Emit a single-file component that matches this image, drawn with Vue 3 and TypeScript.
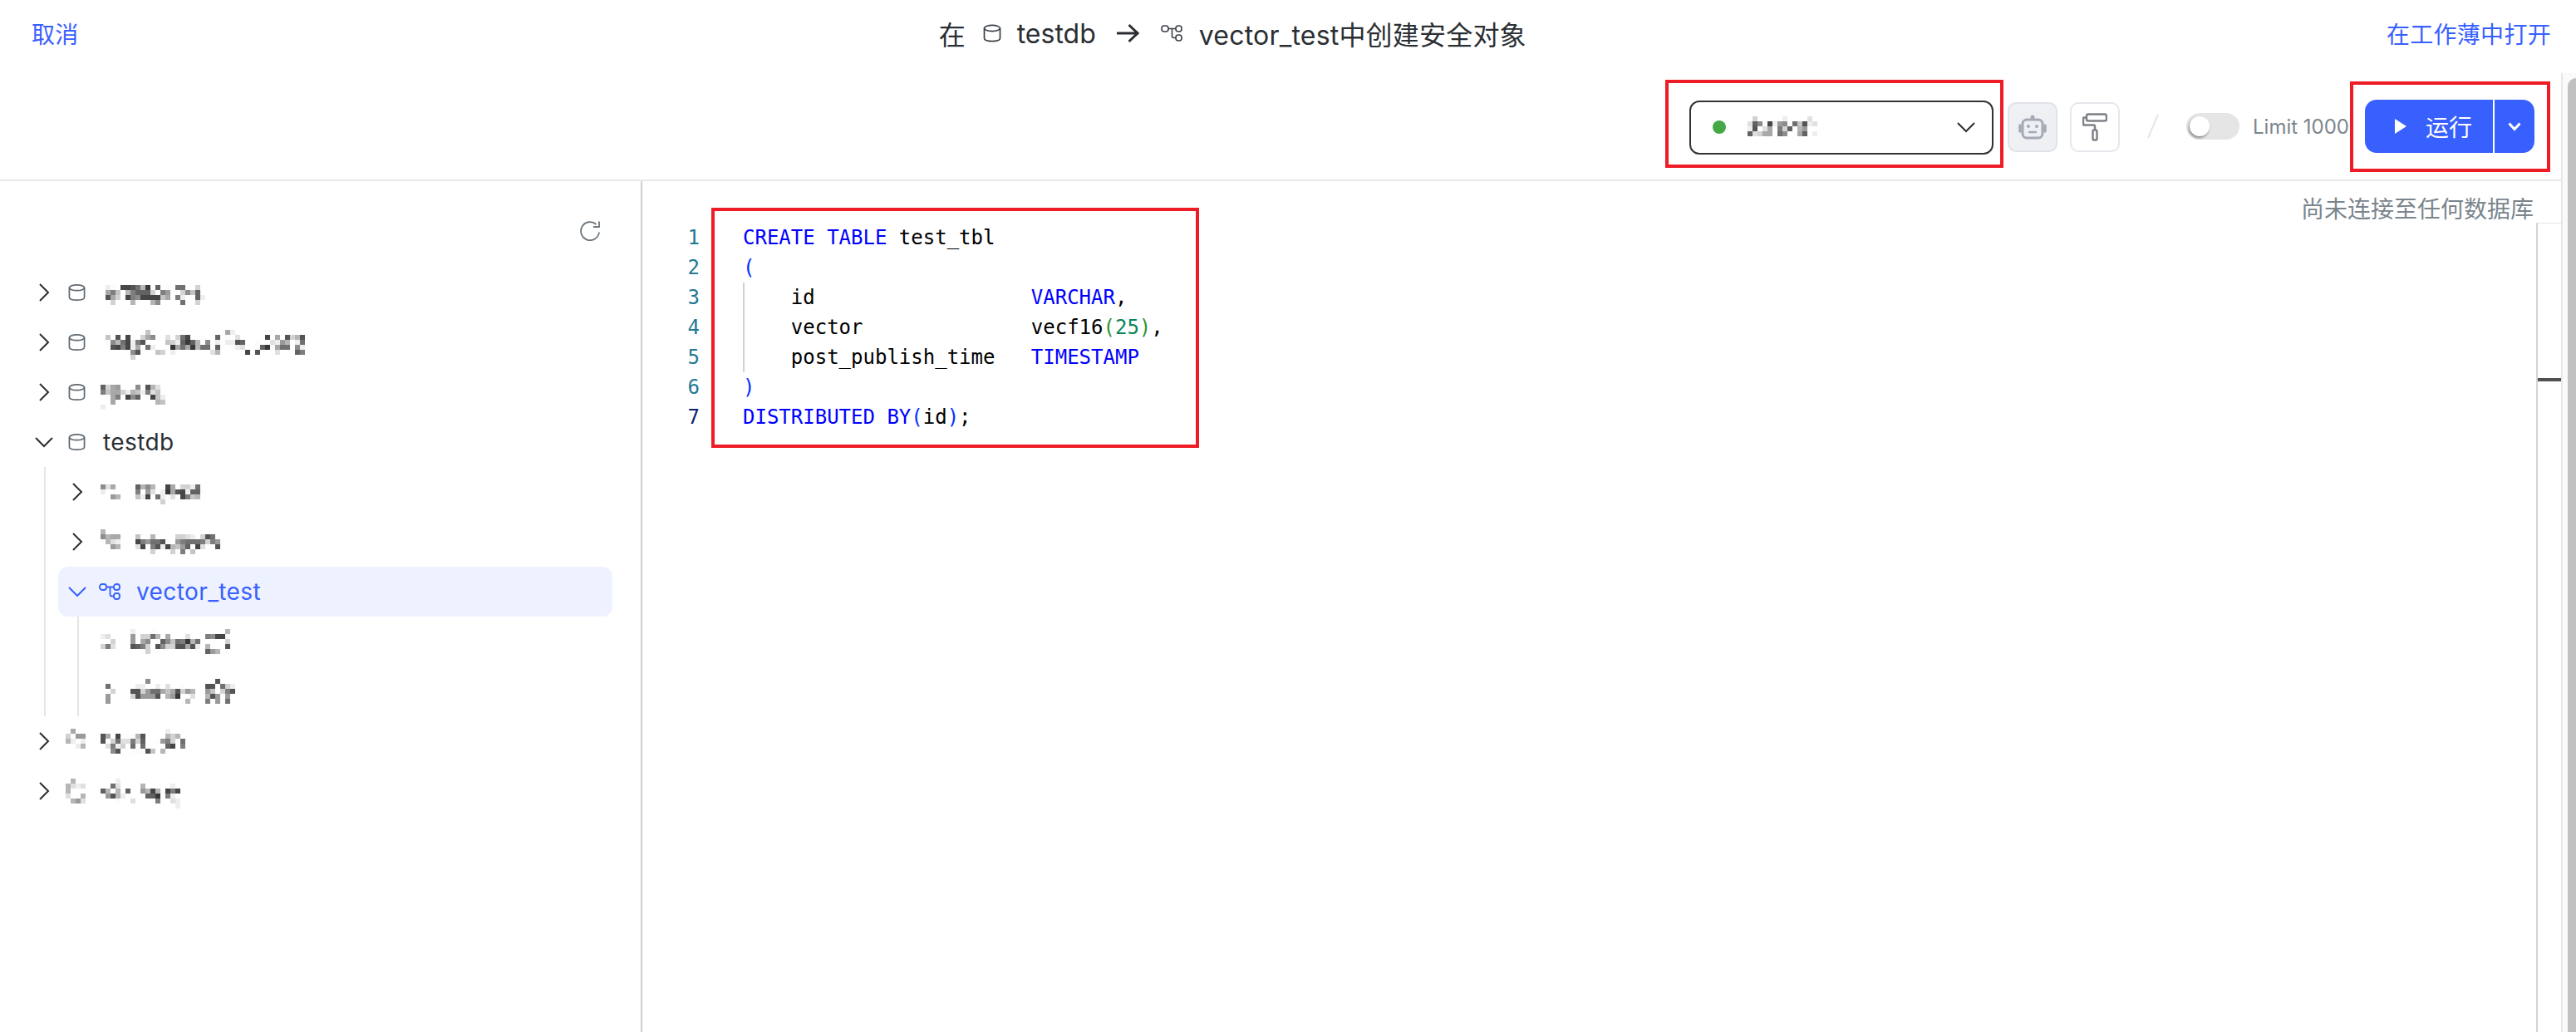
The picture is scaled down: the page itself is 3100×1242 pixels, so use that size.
<script setup lang="ts">
import { h } from 'vue'

type MosaicProps = { rows: string[]; top?: number; ml?: number; mr?: number }

const cell = 6
const shade = (c: string): string => {
  const v = parseInt(c, 16)
  const g = Math.round(42 + (v * (252 - 42)) / 15)
  return `rgb(${g},${g},${g})`
}

const Mosaic = (p: MosaicProps) => {
  const cols = Math.max(...p.rows.map((r) => r.length))
  const rects: ReturnType<typeof h>[] = []
  p.rows.forEach((row, y) => {
    ;[...row].forEach((c, x) => {
      if (c !== '.') rects.push(h('rect', { x: x * cell, y: y * cell, width: cell, height: cell, fill: shade(c) }))
    })
  })
  return h(
    'svg',
    {
      class: 'mosaic',
      width: cols * cell,
      height: p.rows.length * cell,
      'shape-rendering': 'crispEdges',
      style: { marginTop: `${p.top ?? 0}px`, marginLeft: `${p.ml ?? 0}px`, marginRight: `${p.mr ?? 0}px` },
    },
    rects,
  )
}

const m = {
  r1: ['ef.2235a1.4.f.55..c', '96b.a6444c.68..c7b4', '39c.2672222b9.6e..4e', '.c...a...a7....5..c'],
  r2: [
    '........b...............9e',
    'b.3.2f.c97..d.c52.ff..4.f.d.....2.9.3ca3',
    'f7a52e63....bce414a.7.e.ee34..f..de8a.e5',
    '.3262e9f5e..f19591a55f4..fed..f41f955.7e',
    '.....73...bc.e.......da.....2.3...d...46',
    '.....c',
  ],
  r3: ['4c98...7.3ad', '6b99ceabe6db', '.f96.274.f2be', '..9........ab', 'e'],
  a1Icon: ['7d9', 'e.f', '..8a'],
  a1: ['4a7a..29.cce5', '6.8d.e1932e44f', 'be2.5efd.26ba', '.....c'],
  a2Icon: ['a', '7a99', '.ade', '..8a'],
  a2: ['b.fa....ccde.c35', '268553f.865556c68f', 'd2.63e2ab84.2d..3', '...c...c.6.b'],
  b1Icon: ['...', 'ed.', '..c', 'c6d'],
  b1: ['e...f..............a', '8.cc5a.9...d...6722f', '8.97.f47b561a5.....c', '346c.37cc3393e.a...3', '..fc.f.........48a.f'],
  b2Icon: ['...', '.5.', '..c', '.8.', '.8.'],
  b2: ['...7.............3', '.ee..e.d..f....33.5ce', '33c8559b93c8a..8b.c63', 'c38883.a81.fd..a38.8', '...........a...6.8.5'],
  c1Icon: ['f9..', 'cf88', 'ae.e', '..ea'],
  c1: ['.............e', '39.2.ffa3....aca', '3.c5dd6c4..f86c.5', '.d6ec.5.5....42.6', '..73..fff3b.a'],
  c2Icon: ['.a..', 'aded', 'a...', 'd..a', '.a8d'],
  c2: ['...e', '..5d....a....fe', '4a.a.4..8a2a.262', '.83ae....441.6e', '...f..d...f6..de', '...............e'],
  conn: ['.c.....e....d..', 'd47f2e87.5b3ed', 'e3.d9.6c4.a8..', '4dc99.57..94.e'],
}
</script>

<template>
  <div class="page">
    <header class="header">
      <a class="link">取消</a>
      <div class="title">
        <span>在</span>
        <svg class="t-db" width="22" height="22" viewBox="0 0 22 22" fill="none" stroke="#3a4046" stroke-width="1.7">
          <ellipse cx="11" cy="5" rx="9.5" ry="3.6" />
          <path d="M1.5 5v12c0 2.2 3 3.6 9.5 3.6s9.500-1.400 9.500-3.600V5" />
        </svg>
        <span>testdb</span>
        <svg class="t-arrow" width="28" height="24" viewBox="0 0 28 24" fill="none" stroke="#2b2f33" stroke-width="3">
          <path d="M1 12h25M15.500 2l10.500 10-10.500 10" />
        </svg>
        <svg class="t-flow" width="26" height="20" viewBox="0 0 26 20" fill="none" stroke="#3a4046" stroke-width="1.600">
          <rect x="1" y="1" width="8" height="7" rx="3" />
          <rect x="18" y="1" width="7" height="7" rx="3" />
          <rect x="18" y="12" width="7" height="7" rx="3" />
          <path d="M9 4.500h9M13.500 4.500v9a2 2 0 0 0 2 2H18" />
        </svg>
        <span class="t-end">vector_test中创建安全对象</span>
      </div>
      <a class="link">在工作薄中打开</a>
    </header>

    <div class="body">
      <div class="content">
        <div class="toolbar">
          <div class="select">
            <i class="dot"></i>
            <Mosaic :rows="m.conn" :top="17" />
            <svg class="sel-chev" width="22" height="13" viewBox="0 0 22 13" fill="none" stroke="#2b2f33" stroke-width="2">
              <path d="M1 1l10 10L21 1" />
            </svg>
          </div>
          <button class="tool tool-on">
            <svg width="34" height="30" viewBox="0 0 34 30" fill="none" stroke="#a3aab5" stroke-width="3">
              <rect x="5" y="6" width="24" height="22" rx="5" fill="#eef0f3" />
              <circle cx="17" cy="3" r="2.500" fill="#a3aab5" stroke="none" />
              <path d="M17 3v3" />
              <circle cx="12" cy="14" r="2" fill="#a3aab5" stroke="none" />
              <circle cx="22" cy="14" r="2" fill="#a3aab5" stroke="none" />
              <path d="M12 21h10" stroke-width="2.500" />
              <path d="M2 13v7M32 13v7" stroke-width="3.500" stroke-linecap="round" />
            </svg>
          </button>
          <button class="tool">
            <svg width="30" height="34" viewBox="0 0 30 34" fill="none" stroke="#7d8288" stroke-width="2.500">
              <rect x="5" y="1.500" width="24" height="8" rx="2" />
              <path d="M5 5.500H2a1 1 0 0 0-1 1v7a1 1 0 0 0 1 1h11.500a1.500 1.500 0 0 1 1.500 1.500v4" />
              <rect x="12.500" y="20.500" width="5" height="12" rx="1.500" />
            </svg>
          </button>
          <svg class="slash" width="14" height="30" viewBox="0 0 14 30" stroke="#e3e6e9" stroke-width="2">
            <path d="M13 1L1 29" />
          </svg>
          <div class="toggle"><i class="knob"></i></div>
          <span class="limit">Limit 1000</span>
          <div class="run-group">
            <button class="run">
              <svg width="16" height="18" viewBox="0 0 16 18"><path d="M1 0l14 9-14 9z" fill="#fff" /></svg>
              <span>运行</span>
            </button>
            <button class="run-more">
              <svg width="16" height="11" viewBox="0 0 16 11" fill="none" stroke="#fff" stroke-width="3">
                <path d="M1.500 1.500L8 8.500l6.500-7" />
              </svg>
            </button>
          </div>
        </div>

        <div class="panes">
          <aside class="side">
            <div class="refresh-row">
              <svg width="24" height="24" viewBox="0 0 24 24" fill="none" stroke="#6b757d" stroke-width="1.800">
                <path d="M23 13.500A11 11 0 1 1 19.500 4" />
                <path d="M23 .500v6.500h-7" />
              </svg>
            </div>
            <div class="row">
              <svg class="chev" width="26" height="22" viewBox="0 0 26 22" fill="none" stroke="#2b2f33" stroke-width="2"><path d="M8 1l10 10L8 21" /></svg>
              <svg class="db" width="21" height="22" viewBox="0 0 22 22" fill="none" stroke="#5f6972" stroke-width="1.800"><ellipse cx="11" cy="5" rx="9.500" ry="3.600" /><path d="M1.500 5v12c0 2.200 3 3.600 9.500 3.600s9.500-1.400 9.500-3.600V5" /></svg>
              <Mosaic :rows="m.r1" :top="21" :ml="3" />
            </div>
            <div class="row">
              <svg class="chev" width="26" height="22" viewBox="0 0 26 22" fill="none" stroke="#2b2f33" stroke-width="2"><path d="M8 1l10 10L8 21" /></svg>
              <svg class="db" width="21" height="22" viewBox="0 0 22 22" fill="none" stroke="#5f6972" stroke-width="1.800"><ellipse cx="11" cy="5" rx="9.500" ry="3.600" /><path d="M1.500 5v12c0 2.200 3 3.600 9.500 3.600s9.500-1.400 9.500-3.600V5" /></svg>
              <Mosaic :rows="m.r2" :top="15" :ml="3" />
            </div>
            <div class="row">
              <svg class="chev" width="26" height="22" viewBox="0 0 26 22" fill="none" stroke="#2b2f33" stroke-width="2"><path d="M8 1l10 10L8 21" /></svg>
              <svg class="db" width="21" height="22" viewBox="0 0 22 22" fill="none" stroke="#5f6972" stroke-width="1.800"><ellipse cx="11" cy="5" rx="9.500" ry="3.600" /><path d="M1.500 5v12c0 2.200 3 3.600 9.500 3.600s9.500-1.400 9.500-3.600V5" /></svg>
              <Mosaic :rows="m.r3" :top="21" :ml="-3" />
            </div>
            <div class="row">
              <svg class="chev" width="26" height="14" viewBox="0 0 26 14" fill="none" stroke="#2b2f33" stroke-width="2"><path d="M3 2l10 10L23 2" /></svg>
              <svg class="db" width="21" height="22" viewBox="0 0 22 22" fill="none" stroke="#5f6972" stroke-width="1.800"><ellipse cx="11" cy="5" rx="9.500" ry="3.600" /><path d="M1.500 5v12c0 2.200 3 3.600 9.500 3.600s9.500-1.400 9.500-3.600V5" /></svg>
              <span class="label">testdb</span>
            </div>

            <div class="children">
              <div class="row l1">
                <svg class="chev" width="26" height="22" viewBox="0 0 26 22" fill="none" stroke="#2b2f33" stroke-width="2"><path d="M8 1l10 10L8 21" /></svg>
                <Mosaic :rows="m.a1Icon" :top="21" :ml="15" :mr="18" />
                <Mosaic :rows="m.a1" :top="21" />
              </div>
              <div class="row l1">
                <svg class="chev" width="26" height="22" viewBox="0 0 26 22" fill="none" stroke="#2b2f33" stroke-width="2"><path d="M8 1l10 10L8 21" /></svg>
                <Mosaic :rows="m.a2Icon" :top="15" :ml="15" :mr="18" />
                <Mosaic :rows="m.a2" :top="21" />
              </div>
              <div class="row l1 active">
                <svg class="chev" width="26" height="14" viewBox="0 0 26 14" fill="none" stroke="#3860ff" stroke-width="2"><path d="M3 2l10 10L23 2" /></svg>
                <svg class="flow" width="26" height="20" viewBox="0 0 26 20" fill="none" stroke="#3860ff" stroke-width="1.800">
                  <rect x="1" y="1" width="8" height="7" rx="3" />
                  <rect x="18" y="1" width="7" height="7" rx="3" />
                  <rect x="18" y="12" width="7" height="7" rx="3" />
                  <path d="M9 4.500h9M13.500 4.500v9a2 2 0 0 0 2 2H18" />
                </svg>
                <span class="label">vector_test</span>
              </div>
              <div class="children-2">
                <div class="row l2">
                  <Mosaic :rows="m.b1Icon" :top="15" :mr="18" />
                  <Mosaic :rows="m.b1" :top="15" />
                </div>
                <div class="row l2">
                  <Mosaic :rows="m.b2Icon" :top="15" :mr="18" />
                  <Mosaic :rows="m.b2" :top="15" />
                </div>
              </div>
            </div>

            <div class="row">
              <svg class="chev" width="26" height="22" viewBox="0 0 26 22" fill="none" stroke="#2b2f33" stroke-width="2"><path d="M8 1l10 10L8 21" /></svg>
              <Mosaic :rows="m.c1Icon" :top="15" :ml="13" :mr="18" />
              <Mosaic :rows="m.c1" :top="15" />
            </div>
            <div class="row">
              <svg class="chev" width="26" height="22" viewBox="0 0 26 22" fill="none" stroke="#2b2f33" stroke-width="2"><path d="M8 1l10 10L8 21" /></svg>
              <Mosaic :rows="m.c2Icon" :top="15" :ml="13" :mr="18" />
              <Mosaic :rows="m.c2" :top="15" />
            </div>
          </aside>

          <main class="editor">
            <div class="notice">尚未连接至任何数据库</div>
            <div class="gutter">
              <div>1</div><div>2</div><div>3</div><div>4</div><div>5</div><div>6</div><div class="cur">7</div>
            </div>
            <pre class="code"><i class="indent"></i><span class="kw">CREATE TABLE</span> test_tbl
<span class="br">(</span>
    id                  <span class="kw">VARCHAR</span>,
    vector              vecf16<span class="gr">(</span><span class="num">25</span><span class="gr">)</span>,
    post_publish_time   <span class="kw">TIMESTAMP</span>
<span class="br">)</span>
<span class="kw">DISTRIBUTED BY</span><span class="br">(</span>id<span class="br">)</span>;</pre>
            <div class="ruler"><i class="mark"></i></div>
          </main>
        </div>
      </div>
      <div class="track"><div class="thumb"></div></div>
    </div>

    <i class="mark-box box-a"></i>
    <i class="mark-box box-b"></i>
    <i class="mark-box box-c"></i>
  </div>
</template>

<style>
html,
body {
  margin: 0;
  background: #fff;
  overflow: hidden;
}
</style>

<style scoped>
.page {
  position: relative;
  width: 3100px;
  height: 1242px;
  overflow: hidden;
  display: flex;
  flex-direction: column;
  background: #fff;
  font-family: Inter, 'Noto Sans CJK SC', sans-serif;
  color: #2b2f33;
}
.header {
  height: 88px;
  box-sizing: border-box;
  padding: 0 30px 8px 38px;
  display: flex;
  align-items: center;
  justify-content: space-between;
  flex: none;
}
.link {
  font-size: 28px;
  color: #3860ff;
  letter-spacing: 0.3px;
}
.title {
  display: flex;
  align-items: center;
  font-size: 32px;
  color: #2b2f33;
}
.t-db {
  margin: 0 19px 0 21px;
}
.t-arrow {
  margin: 0 26px 0 24px;
}
.t-flow {
  margin-right: 20px;
}
.t-end {
  letter-spacing: 0.2px;
}
.body {
  flex: 1;
  min-height: 0;
  display: flex;
}
.content {
  flex: 1;
  min-width: 0;
  display: flex;
  flex-direction: column;
}
.toolbar {
  height: 130px;
  box-sizing: border-box;
  flex: none;
  border-bottom: 2px solid #e5e9ec;
  display: flex;
  align-items: center;
  justify-content: flex-end;
  padding-right: 32px;
}
.select {
  width: 366px;
  height: 65px;
  box-sizing: border-box;
  margin-top: 2px;
  border: 2px solid #333;
  border-radius: 12px;
  display: flex;
  align-items: center;
  padding: 0 20px 0 26px;
}
.dot {
  width: 16px;
  height: 16px;
  border-radius: 50%;
  background: #43a845;
  margin-right: 26px;
}
.sel-chev {
  margin-left: auto;
}
.tool {
  width: 60px;
  height: 60px;
  box-sizing: border-box;
  margin: 2px 0 0 15px;
  padding: 0;
  border: 2px solid #e5e7eb;
  border-radius: 10px;
  background: #fff;
  display: flex;
  align-items: center;
  justify-content: center;
}
.tool-on {
  margin-left: 17px;
  background: #eef0f3;
  border-color: #dfe2e6;
}
.slash {
  margin: 0 33px;
}
.toggle {
  width: 64px;
  height: 32px;
  border-radius: 16px;
  background: #e5e5e5;
  display: flex;
  align-items: center;
  padding-left: 4px;
  box-sizing: border-box;
}
.knob {
  width: 24px;
  height: 24px;
  border-radius: 50%;
  background: #fff;
  box-shadow: -1px 2px 3px rgba(0, 0, 0, 0.4);
}
.limit {
  margin-left: 16px;
  font-size: 24px;
  color: #7b858d;
  white-space: nowrap;
  width: 117px;
}
.run-group {
  margin-left: 18px;
  display: flex;
  gap: 2px;
  height: 64px;
}
.run,
.run-more {
  border: 0;
  padding: 0;
  background: #3860ff;
  color: #fff;
  font-family: inherit;
  display: flex;
  align-items: center;
}
.run {
  width: 154px;
  border-radius: 14px 0 0 14px;
  padding-left: 35px;
  gap: 22px;
  font-size: 28px;
  box-sizing: border-box;
}
.run-more {
  width: 48px;
  border-radius: 0 14px 14px 0;
  justify-content: center;
}
.panes {
  flex: 1;
  min-height: 0;
  display: flex;
}
.side {
  width: 773px;
  box-sizing: border-box;
  flex: none;
  border-right: 2px solid #cfcfcf;
}
.refresh-row {
  height: 104px;
  box-sizing: border-box;
  padding: 48px 49px 0 0;
  display: flex;
  justify-content: flex-end;
  align-items: flex-start;
}
.row {
  height: 60px;
  display: flex;
  align-items: center;
  padding-left: 40px;
}
.mosaic {
  display: block;
  align-self: flex-start;
  flex: none;
}
.db {
  margin: 0 21px 0 16px;
  flex: none;
}
.label {
  font-size: 28px;
  line-height: 60px;
  letter-spacing: 0.4px;
}
.children {
  margin: 0 34px 0 53px;
  border-left: 2px solid #e5e5e5;
  padding-left: 15px;
}
.row.l1 {
  padding-left: 10px;
  border-radius: 12px;
}
.flow {
  margin: 0 19px 0 13px;
  flex: none;
}
.active {
  background: #eef2ff;
}
.active .label {
  color: #3860ff;
}
.children-2 {
  margin-left: 23px;
  border-left: 2px solid #e5e5e5;
}
.row.l2 {
  padding-left: 26px;
}
.editor {
  flex: 1;
  min-width: 0;
  position: relative;
  display: flex;
  align-items: flex-start;
  padding-top: 50px;
  box-sizing: border-box;
  font-family: 'DejaVu Sans Mono', monospace;
  font-size: 24px;
  line-height: 36px;
}
.notice {
  position: absolute;
  top: 18px;
  right: 33px;
  font-family: Inter, 'Noto Sans CJK SC', sans-serif;
  font-size: 28px;
  line-height: 32px;
  color: #7b858d;
}
.gutter {
  width: 69px;
  text-align: right;
  color: #237893;
}
.cur {
  color: #0b216f;
}
.code {
  position: relative;
  margin: 0 0 0 52px;
  font: inherit;
  color: #000;
}
.indent {
  position: absolute;
  left: 0;
  top: 72px;
  width: 2px;
  height: 108px;
  background: #d0d0d0;
}
.kw {
  color: #0000ff;
}
.br {
  color: #0431fa;
}
.gr {
  color: #319331;
}
.num {
  color: #098658;
}
.ruler {
  position: absolute;
  right: 0;
  top: 50px;
  bottom: 0;
  width: 28px;
  border-left: 2px solid #d4d4d4;
  border-top: 1px solid #e5e5e5;
}
.mark {
  position: absolute;
  left: 0;
  right: 0;
  top: 186px;
  height: 4px;
  background: #505050;
}
.track {
  width: 18px;
  box-sizing: border-box;
  flex: none;
  border-left: 2px solid #e5e7eb;
  background: #fafafa;
  padding: 6px 0 0 6px;
  display: flex;
}
.thumb {
  flex: 1;
  background: #c1c1c1;
  border-radius: 10px 0 0 0;
}
.mark-box {
  position: absolute;
  box-sizing: border-box;
  border: 4px solid #ee1c25;
}
.box-a {
  left: 2004px;
  top: 96px;
  width: 407px;
  height: 106px;
}
.box-b {
  left: 2828px;
  top: 98px;
  width: 241px;
  height: 109px;
}
.box-c {
  left: 856px;
  top: 250px;
  width: 587px;
  height: 289px;
}
</style>
